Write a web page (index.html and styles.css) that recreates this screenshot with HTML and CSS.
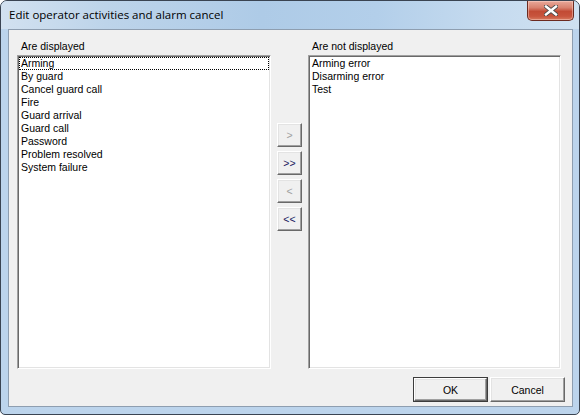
FILE: index.html
```html
<!DOCTYPE html>
<html>
<head>
<meta charset="utf-8">
<link rel="stylesheet" href="styles.css">
</head>
<body>
<div class="window">
  <div class="titlebar">
    <span class="title">Edit operator activities and alarm cancel</span>
    <div class="close">
      <svg width="14" height="11" viewBox="0 0 14 11">
        <path d="M2 1.5 L12 9.5 M12 1.5 L2 9.5" stroke="#4a4a4a" stroke-width="4.2" stroke-linecap="square"/>
        <path d="M2 1.5 L12 9.5 M12 1.5 L2 9.5" stroke="#fff" stroke-width="2.4" stroke-linecap="square"/>
      </svg>
    </div>
  </div>
  <div class="frame">
    <div class="client">
      <div class="lists">
        <div class="col">
          <div class="label">Are displayed</div>
          <div class="listbox">
            <div class="item focus">Arming</div>
            <div class="item">By guard</div>
            <div class="item">Cancel guard call</div>
            <div class="item">Fire</div>
            <div class="item">Guard arrival</div>
            <div class="item">Guard call</div>
            <div class="item">Password</div>
            <div class="item">Problem resolved</div>
            <div class="item">System failure</div>
          </div>
        </div>
        <div class="movers">
          <button class="mbtn disabled">&gt;</button>
          <button class="mbtn">&gt;&gt;</button>
          <button class="mbtn disabled">&lt;</button>
          <button class="mbtn">&lt;&lt;</button>
        </div>
        <div class="col">
          <div class="label">Are not displayed</div>
          <div class="listbox">
            <div class="item">Arming error</div>
            <div class="item">Disarming error</div>
            <div class="item">Test</div>
          </div>
        </div>
      </div>
      <div class="actions">
        <div class="default-ring"><button class="btn">OK</button></div>
        <button class="btn">Cancel</button>
      </div>
    </div>
  </div>
</div>
</body>
</html>
```

FILE: styles.css
```css
html, body {
  margin: 0;
  padding: 0;
  background: #ffffff;
}
body {
  width: 580px;
  height: 415px;
  overflow: hidden;
  font-family: "Liberation Sans", Arial, sans-serif;
  font-size: 10.5px;
  color: #000;
}
.window {
  width: 580px;
  height: 415px;
  box-sizing: border-box;
  border: 1px solid #3a4452;
  border-radius: 7px 7px 5px 5px;
  background: #bcd4ec;
  display: flex;
  flex-direction: column;
  overflow: hidden;
}
.titlebar {
  height: 28px;
  flex: none;
  display: flex;
  align-items: flex-start;
  padding: 0 5px 0 8px;
  background: linear-gradient(90deg, #d2e1f0 0%, #bdd4ea 18%, #aecbe7 45%, #b3cfea 65%, #c6dbef 85%, #cfe1f1 100%);
}
.title {
  font-family: "Open Sans", "Noto Sans", sans-serif;
  font-size: 11.5px;
  line-height: 28px;
  color: #000;
  white-space: nowrap;
}
.close {
  margin-left: auto;
  width: 47px;
  height: 20px;
  box-sizing: border-box;
  border: 1px solid #6b2a20;
  border-top: none;
  border-radius: 0 0 5px 5px;
  background: linear-gradient(180deg, #e9a99a 0%, #d9826f 35%, #c24b35 55%, #c8543d 80%, #d77a5f 100%);
  box-shadow: inset 0 0 0 1px rgba(255, 220, 210, 0.45);
  display: flex;
  align-items: center;
  justify-content: center;
}
.close svg {
  display: block;
  margin-top: 0px;
}
.frame {
  flex: 1;
  padding: 0 6px 7px 7px;
  display: flex;
}
.client {
  flex: 1;
  border: 1px solid #8e9eb0;
  background: #f0f0f0;
  padding: 10px 7px 4px 8px;
  display: flex;
  flex-direction: column;
}
.lists {
  display: grid;
  grid-template-columns: 254px 25px 253px;
  column-gap: 6px;
  align-items: start;
}
.col {
  display: flex;
  flex-direction: column;
}
.label {
  height: 13px;
  line-height: 13px;
  margin: 0 0 2px 4px;
  white-space: nowrap;
}
.listbox {
  height: 314px;
  box-sizing: border-box;
  background: #fff;
  border: 1px solid;
  border-color: #a0a0a0 #ffffff #ffffff #a0a0a0;
  box-shadow: inset 1px 1px 0 #696969, inset -1px -1px 0 #e3e3e3;
  padding: 1px;
}
.item {
  height: 13px;
  line-height: 13px;
  padding-left: 2px;
  white-space: nowrap;
  box-sizing: border-box;
}
.item.focus {
  outline: 1px dotted #000;
  outline-offset: -1px;
}
.movers {
  margin-top: 83px;
  display: flex;
  flex-direction: column;
  gap: 4px;
}
.mbtn {
  width: 25px;
  height: 24px;
  box-sizing: border-box;
  padding: 0;
  margin: 0;
  background: #f0f0f0;
  border: 1px solid;
  border-color: #ffffff #696969 #696969 #ffffff;
  box-shadow: inset -1px -1px 0 #a0a0a0, inset 1px 1px 0 #e3e3e3;
  font-family: "Liberation Sans", Arial, sans-serif;
  font-size: 10.5px;
  color: #1a1a60;
  line-height: 20px;
}
.mbtn.disabled {
  color: #a0a0a0;
}
.actions {
  margin-top: 8px;
  display: flex;
  justify-content: flex-end;
  gap: 2px;
}
.default-ring {
  border: 1px solid #3c3c3c;
  display: flex;
}
.btn {
  width: 75px;
  height: 25px;
  box-sizing: border-box;
  margin: 0;
  padding: 0;
  background: #f0f0f0;
  border: 1px solid;
  border-color: #ffffff #696969 #696969 #ffffff;
  box-shadow: inset -1px -1px 0 #a0a0a0, inset 1px 1px 0 #e3e3e3;
  font-family: "Liberation Sans", Arial, sans-serif;
  font-size: 10.5px;
  color: #000;
}
.default-ring .btn {
  width: 73px;
  height: 23px;
}
```
